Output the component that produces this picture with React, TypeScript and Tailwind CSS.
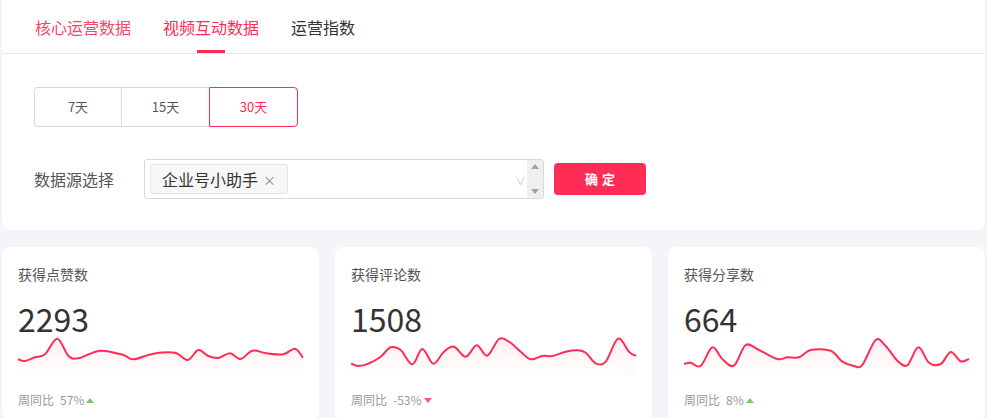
import React from "react";

type Pt = [number, number];

const W = 285;
const H = 40;

// smooth line through the points (catmull-rom -> bezier)
function smooth(pts: Pt[]) {
  let d = `M${pts[0][0]},${pts[0][1]}`;
  for (let i = 0; i < pts.length - 1; i++) {
    const p0 = pts[i - 1] || pts[i];
    const p1 = pts[i];
    const p2 = pts[i + 1];
    const p3 = pts[i + 2] || p2;
    const c1x = p1[0] + (p2[0] - p0[0]) / 6;
    const c1y = p1[1] + (p2[1] - p0[1]) / 6;
    const c2x = p2[0] - (p3[0] - p1[0]) / 6;
    const c2y = p2[1] - (p3[1] - p1[1]) / 6;
    d += ` C${c1x.toFixed(1)},${c1y.toFixed(1)} ${c2x.toFixed(1)},${c2y.toFixed(1)} ${p2[0]},${p2[1]}`;
  }
  return d;
}

const cards = [
  {
    title: "获得点赞数",
    value: "2293",
    ratio: "57%",
    up: true,
    pts: [
      [0, 23.3], [7, 25], [17, 21.3], [27, 18.3], [39.3, 2.7], [50.3, 19.7], [60.3, 22.3],
      [82, 14.7], [105.3, 19], [115.3, 23.3], [135.3, 17.7], [157, 16.7], [169.7, 24],
      [180.3, 14], [190.3, 20], [200.3, 22], [212, 17.3], [222.7, 23], [234.3, 14.7],
      [248.7, 17.3], [265.3, 18.3], [277, 12.7], [285, 21.7],
    ] as Pt[],
  },
  {
    title: "获得评论数",
    value: "1508",
    ratio: "-53%",
    up: false,
    pts: [
      [0, 27.3], [7.3, 30], [18, 27.3], [29.7, 20.7], [39.7, 11.3], [49.7, 14], [61.3, 28.3],
      [71.3, 13], [82.3, 27.7], [93, 15.7], [103, 10.7], [114.7, 20.7], [125.7, 9.3],
      [136.3, 19.7], [148, 3], [158, 5.7], [169.7, 15.7], [179.7, 23.3], [191.3, 20],
      [201.3, 20], [214.7, 15.7], [226.3, 14.3], [234.7, 16.7], [244.7, 27.3], [254.7, 25.7],
      [267, 2.7], [278, 15.7], [285, 20],
    ] as Pt[],
  },
  {
    title: "获得分享数",
    value: "664",
    ratio: "8%",
    up: true,
    pts: [
      [0, 28], [6.7, 26.7], [16.7, 30], [28.3, 11.3], [38.3, 23], [50, 29.7], [61.7, 9],
      [75, 14], [93.3, 23], [103.3, 21.3], [115, 21.3], [126.7, 14], [146.7, 14.7],
      [158.3, 25.7], [170, 30], [178.3, 29], [191.7, 4], [201.7, 10], [213.3, 24.7],
      [223.3, 29.3], [234.3, 11.3], [245, 26.7], [256.7, 28], [266.7, 16], [276.7, 25.3],
      [285, 23],
    ] as Pt[],
  },
];

function Spark({ pts, id }: { pts: Pt[]; id: string }) {
  const line = smooth(pts);
  return (
    <svg width={W} height={H} viewBox={`0 0 ${W} ${H}`} className="block overflow-visible">
      <defs>
        <linearGradient id={id} x1="0" y1="0" x2="0" y2="1">
          <stop offset="0%" stopColor="#ff2d55" stopOpacity="0.07" />
          <stop offset="100%" stopColor="#ff2d55" stopOpacity="0.01" />
        </linearGradient>
      </defs>
      <path d={`${line} L${W},${H} L0,${H} Z`} fill={`url(#${id})`} />
      <path d={line} fill="none" stroke="#ff2d55" strokeWidth="2" strokeLinejoin="round" />
    </svg>
  );
}

export default function App() {
  const tabs = ["核心运营数据", "视频互动数据", "运营指数"];
  const days = [
    { label: "7天", w: "w-[87px]" },
    { label: "15天", w: "w-[88px]" },
    { label: "30天", w: "w-[89px]" },
  ];

  return (
    <div className="min-h-screen bg-[#f4f5f9] px-[2px] font-['Noto_Sans_CJK_SC',sans-serif]">
      {/* filter panel */}
      <div className="bg-white rounded-b-lg pb-[31px]">
        <div className="h-[54px] border-b border-[#e8e8e8] flex pl-[33px] gap-8">
          {tabs.map((t, i) => (
            <div
              key={t}
              className={`relative h-full flex items-center text-[16px] ${
                i === 0 ? "text-[#f6476a]" : i === 1 ? "text-[#ff2d55]" : "text-[#333]"
              }`}
            >
              {t}
              {i === 1 && (
                <div className="absolute bottom-0 left-1/2 -translate-x-1/2 w-7 h-[3px] bg-[#ff2d55]" />
              )}
            </div>
          ))}
        </div>

        <div className="pl-[32px] mt-[33px] flex">
          {days.map((d, i) => (
            <div
              key={d.label}
              className={`${d.w} h-10 flex items-center justify-center text-[13px] border ${
                i === 2
                  ? "border-[#ff2d55] text-[#ff2d55] rounded-r-[4px]"
                  : "border-[#d9d9d9] text-[#555]"
              } ${i === 0 ? "rounded-l-[4px] border-r-0" : ""} ${i === 1 ? "border-r-0" : ""}`}
            >
              {d.label}
            </div>
          ))}
        </div>

        <div className="pl-[32px] mt-[32px] flex items-center">
          <div className="w-[110px] text-[16px] text-[#555]">数据源选择</div>
          <div className="w-[400px] h-10 border border-[#d9d9d9] rounded-[3px] flex items-center pl-[5px]">
            <div className="h-[30px] px-[11px] flex items-center gap-[5px] bg-[#f7f7f7] border border-[#e3e3e3] rounded-[3px] text-[16px] text-[#333]">
              企业号小助手
              <span className="text-[13px] text-[#888] leading-none">×</span>
            </div>
            <div className="flex-1" />
            <svg width="9" height="12" viewBox="0 0 9 12" className="mr-[2px] mt-1">
              <path d="M1 2 L4.5 10 L8 2" fill="none" stroke="#cfcfcf" strokeWidth="1" />
            </svg>
            <div className="w-[16px] h-full bg-[#efefef] flex flex-col items-center justify-between py-[4px] rounded-r-[3px]">
              <div className="w-0 h-0 border-l-[4px] border-r-[4px] border-b-[5px] border-l-transparent border-r-transparent border-b-[#a3a3a3]" />
              <div className="w-0 h-0 border-l-[4px] border-r-[4px] border-t-[5px] border-l-transparent border-r-transparent border-t-[#a3a3a3]" />
            </div>
          </div>
          <button className="ml-[10px] w-[92px] h-8 bg-[#ff2d55] rounded-[4px] text-white text-[13px] font-bold tracking-[4px] pl-[4px]">
            确定
          </button>
        </div>
      </div>

      {/* stat cards */}
      <div className="mt-[17px] grid grid-cols-3 gap-4">
        {cards.map((c, i) => (
          <div key={c.title} className="bg-white rounded-lg px-4 pt-[17px] pb-3">
            <div className="text-[14px] leading-5 text-[#555]">{c.title}</div>
            <div className="mt-[16px] text-[32px] leading-9 text-[#333]">{c.value}</div>
            <Spark pts={c.pts} id={`g${i}`} />
            <div className="mt-[16px] flex items-center text-[12px] leading-4 text-[#999]">
              <span>周同比</span>
              <span className="ml-[6px]">{c.ratio}</span>
              {c.up ? (
                <span className="ml-[2px] w-0 h-0 border-l-[4px] border-r-[4px] border-b-[5px] border-l-transparent border-r-transparent border-b-[#7cc96a]" />
              ) : (
                <span className="ml-[2px] w-0 h-0 border-l-[4px] border-r-[4px] border-t-[5px] border-l-transparent border-r-transparent border-t-[#f5605f]" />
              )}
            </div>
          </div>
        ))}
      </div>
    </div>
  );
}
